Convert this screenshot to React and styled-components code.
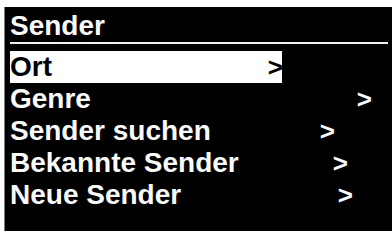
import styled, { createGlobalStyle } from 'styled-components';

const Global = createGlobalStyle`
html, body {
  margin: 0;
  padding: 0;
  background: #FFFFFF;
}
`
const Screen = styled.div`
margin: 7px 0 0 4px;
width: 388px;
height: 224px;
background: #000000;
border-left: 1px solid #7a7a7a;
box-sizing: border-box;
padding: 3px 4px 0 5px;
font-family: "Liberation Sans", Arial, sans-serif;
font-weight: bold;
font-size: 28px;
color: #FAFAFA;
display: flex;
flex-direction: column;
`
const Title = styled.div`
line-height: 32px;
height: 32px;
border-bottom: 2px solid #F2F2F2;
`
const List = styled.div`
margin-top: 7px;
display: flex;
flex-direction: column;
`
const Row = styled.div`
display: flex;
justify-content: space-between;
align-items: center;
height: 32px;
line-height: 32px;
width: ${p => p.$width}px;
background: ${p => (p.$active ? '#FFFFFF' : 'transparent')};
color: ${p => (p.$active ? '#000000' : '#FAFAFA')};
white-space: nowrap;
`
const Chevron = styled.span`
font-size: 26px;
margin-right: -1px;
`

const items = [
  { label: 'Ort', width: 272, active: true },
  { label: 'Genre', width: 361 },
  { label: 'Sender suchen', width: 324 },
  { label: 'Bekannte Sender', width: 337 },
  { label: 'Neue Sender', width: 342 },
];

export default function App() {
  return (
    <>
      <Global />
      <Screen>
        <Title>Sender</Title>
        <List>
          {items.map(item => (
            <Row key={item.label} $width={item.width} $active={item.active}>
              <span>{item.label}</span>
              <Chevron>&gt;</Chevron>
            </Row>
          ))}
        </List>
      </Screen>
    </>
  );
}
